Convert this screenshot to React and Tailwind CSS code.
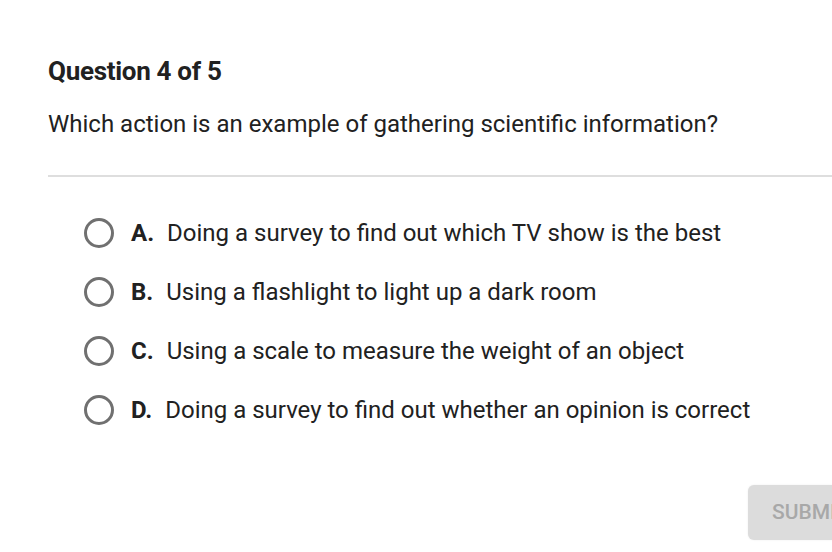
export default function App() {
  const opts = [
    ["A.", "Doing a survey to find out which TV show is the best"],
    ["B.", "Using a flashlight to light up a dark room"],
    ["C.", "Using a scale to measure the weight of an object"],
    ["D.", "Doing a survey to find out whether an opinion is correct"],
  ];
  return (
    <div className="w-[832px] h-[552px] overflow-hidden bg-white text-[#212121]" style={{ fontFamily: "Roboto, 'Liberation Sans', sans-serif" }}>
      <div className="w-[900px] pl-[48px] pt-[54px]">
        <h1 className="text-[26px] leading-[34px] font-bold tracking-[-0.3px]">Question 4 of 5</h1>
        <p className="mt-[20px] text-[24px] leading-[32px]">Which action is an example of gathering scientific information?</p>
        <div className="mt-[35px] h-[2px] bg-[#dedede]"></div>
        <div className="mt-[41px] pl-[36px] flex flex-col gap-[29px]">
          {opts.map(([l, t]) => (
            <div key={l} className="flex items-center h-[30px]">
              <span className="w-[30px] h-[30px] rounded-full border-[3px] border-[#707070] shrink-0"></span>
              <span className="ml-[17px] text-[24px] font-bold">{l}</span>
              <span className="ml-[13px] text-[24px] whitespace-nowrap">{t}</span>
            </div>
          ))}
        </div>
        <div className="mt-[60px] ml-[700px] w-[120px] h-[55px] rounded-[6px] bg-[#dcdcdc] shadow-[0_0_2px_rgba(0,0,0,0.08)] flex items-center pl-[24px] text-[21px] text-[#a8a8a8] font-medium">SUBMIT</div>
      </div>
    </div>
  );
}
